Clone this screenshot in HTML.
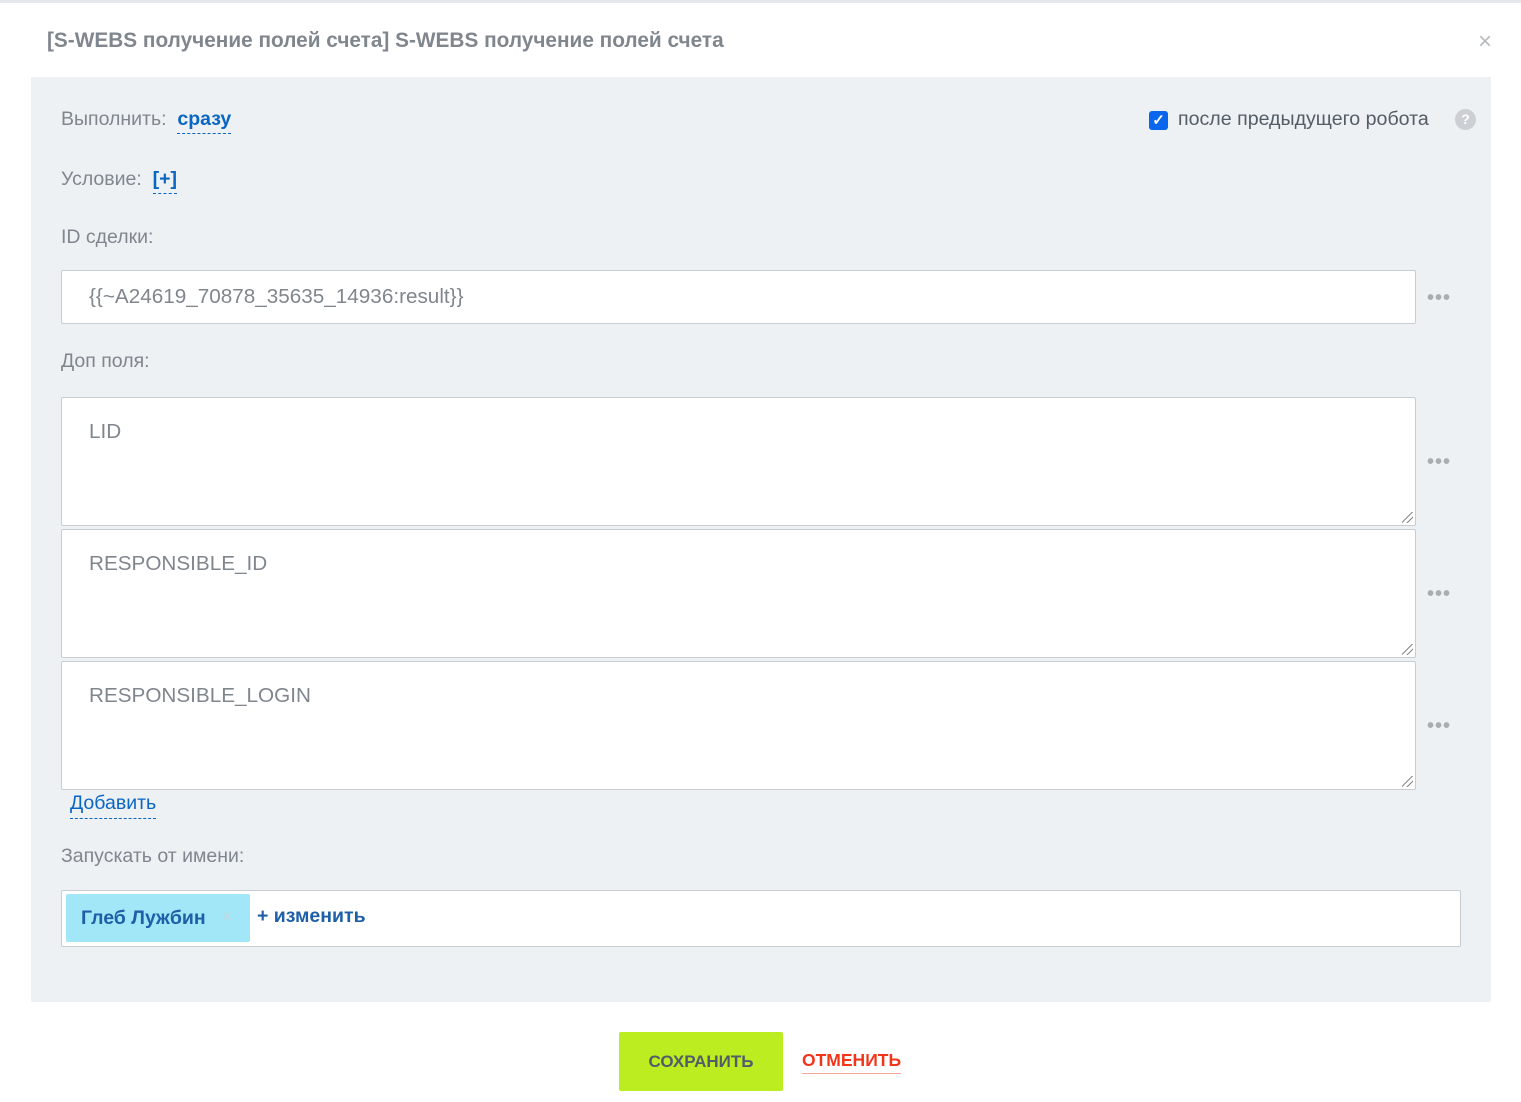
<!DOCTYPE html>
<html><head><meta charset="utf-8"><style>
*{box-sizing:border-box;margin:0;padding:0}
body{width:1521px;height:1102px;background:#fff;font-family:"Liberation Sans",sans-serif;position:relative;overflow:hidden;color:#80868e}
.a{position:absolute}
.topbar{left:0;top:0;width:1521px;height:3px;background:#e4e8ec}
.title{left:47px;top:29px;font-size:20.8px;font-weight:bold;color:#80868e}
.close{left:1478px;top:28px;font-size:24px;color:#b7bbc0}
.panel{left:31px;top:77px;width:1460px;height:925px;background:#edf1f4}
.lbl{font-size:19.5px;color:#80868e}
.link{color:#0b66c3;font-weight:bold;border-bottom:1px dashed #0b66c3}
.inp{background:#fff;border:1px solid #c6cdd3;border-radius:2px;font-size:20.7px;color:#80868e;padding-left:27px}
.dots{font-size:20px;color:#a8adb2;letter-spacing:1px;font-weight:bold}
.grip{position:absolute;right:2px;bottom:2px;width:11px;height:11px;background:linear-gradient(135deg,transparent 45%,#888 45%,#888 52%,transparent 52%,transparent 70%,#888 70%,#888 77%,transparent 77%)}
</style></head><body>
<div class="a topbar"></div>
<div class="a title">[S-WEBS получение полей счета] S-WEBS получение полей счета</div>
<div class="a close">×</div>
<div class="a panel"></div>
<div class="a lbl" style="left:61px;top:108px">Выполнить:&nbsp; <span class="link" style="padding-bottom:3px">сразу</span></div>
<div class="a" style="left:1149px;top:111px;width:19px;height:19px;background:#0b66ee;border-radius:3px;color:#fff;font-size:15px;text-align:center;line-height:19px;font-weight:bold">✓</div>
<div class="a" style="left:1178px;top:108px;font-size:19.6px;color:#545c66">после предыдущего робота</div>
<div class="a" style="left:1455px;top:109px;width:21px;height:21px;border-radius:50%;background:#ccd0d4;color:#fff;font-size:14px;font-weight:bold;text-align:center;line-height:21px">?</div>
<div class="a lbl" style="left:61px;top:168px">Условие:&nbsp; <span class="link" style="padding-bottom:3px">[+]</span></div>
<div class="a lbl" style="left:61px;top:226px">ID сделки:</div>
<div class="a inp" style="left:61px;top:270px;width:1355px;height:54px;line-height:52px">{{~A24619_70878_35635_14936:result}}</div>
<div class="a dots" style="left:1427px;top:287px">•••</div>
<div class="a lbl" style="left:61px;top:350px">Доп поля:</div>
<div class="a inp" style="left:61px;top:397px;width:1355px;height:129px;padding-top:22px">LID<div class="grip"></div></div>
<div class="a dots" style="left:1427px;top:451px">•••</div>
<div class="a inp" style="left:61px;top:529px;width:1355px;height:129px;padding-top:22px">RESPONSIBLE_ID<div class="grip"></div></div>
<div class="a dots" style="left:1427px;top:583px">•••</div>
<div class="a inp" style="left:61px;top:661px;width:1355px;height:129px;padding-top:22px">RESPONSIBLE_LOGIN<div class="grip"></div></div>
<div class="a dots" style="left:1427px;top:715px">•••</div>
<div class="a" style="left:70px;top:792px;font-size:19.5px;color:#0b66c3;border-bottom:1px dashed #0b66c3;padding-bottom:3px">Добавить</div>
<div class="a lbl" style="left:61px;top:845px">Запускать от имени:</div>
<div class="a" style="left:61px;top:890px;width:1400px;height:57px;background:#fff;border:1px solid #c6cdd3;border-radius:2px"></div>
<div class="a" style="left:66px;top:894px;width:184px;height:48px;background:#a1e7f7;border-radius:2px"></div>
<div class="a" style="left:81px;top:907px;font-size:19.5px;font-weight:bold;color:#1f5fa8">Глеб Лужбин</div>
<div class="a" style="left:222px;top:907px;font-size:17px;color:#b8dbe6;font-weight:bold">×</div>
<div class="a" style="left:257px;top:905px;font-size:19.5px;font-weight:bold;color:#1f5fa8">+ изменить</div>
<div class="a" style="left:619px;top:1032px;width:164px;height:59px;background:#bbed21;border-radius:2px;color:#535c69;font-size:17px;font-weight:bold;text-align:center;line-height:59px">СОХРАНИТЬ</div>
<div class="a" style="left:802px;top:1050px;font-size:17.5px;font-weight:bold;color:#f1361b;border-bottom:1px solid #f7a799;padding-bottom:2px">ОТМЕНИТЬ</div>
</body></html>
